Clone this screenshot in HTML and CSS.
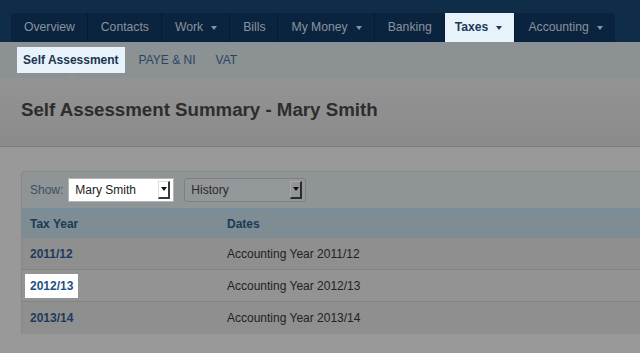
FILE: index.html
```html
<!DOCTYPE html>
<html lang="en">
<head>
  <meta charset="UTF-8" />
  <title>Self Assessment Summary - Mary Smith</title>
  <link rel="stylesheet" href="styles.css">
</head>
<body>

  <!-- Main navigation -->
  <header class="topbar">
    <ul class="tabs">
      <li>Overview</li>
      <li>Contacts</li>
      <li>Work <span class="caret"></span></li>
      <li>Bills</li>
      <li>My Money <span class="caret"></span></li>
      <li>Banking</li>
      <li class="active">Taxes <span class="caret"></span></li>
      <li class="last">Accounting <span class="caret"></span></li>
    </ul>
  </header>

  <!-- Sub navigation -->
  <nav class="subnav">
    <a href="#" class="current">Self Assessment</a>
    <a href="#">PAYE &amp; NI</a>
    <a href="#">VAT</a>
  </nav>

  <section class="page-head">
    <h1>Self Assessment Summary - Mary Smith</h1>
  </section>

  <main class="content">
    <div class="panel">
      <div class="toolbar">
        <label>Show:</label>
        <div class="select select-light">
          <span>Mary Smith</span>
          <span class="select-btn"></span>
        </div>
        <div class="select select-dark">
          <span>History</span>
          <span class="select-btn"></span>
        </div>
      </div>

      <div class="row row-head">
        <div>Tax Year</div>
        <div>Dates</div>
      </div>
      <div class="row odd">
        <div><a href="#" class="year">2011/12</a></div>
        <div>Accounting Year 2011/12</div>
      </div>
      <div class="row even">
        <div><a href="#" class="year spot">2012/13</a></div>
        <div>Accounting Year 2012/13</div>
      </div>
      <div class="row odd">
        <div><a href="#" class="year">2013/14</a></div>
        <div>Accounting Year 2013/14</div>
      </div>
    </div>
  </main>

</body>
</html>
```

FILE: styles.css
```css
* { margin: 0; padding: 0; box-sizing: border-box; }
body {
  font-family: 'Liberation Sans', Arial, sans-serif;
  font-size: 12px;
  background-color: #999;
  color: #222;
  overflow: hidden;
}
a { text-decoration: none; color: inherit; }

/* --- top nav --- */
.topbar {
  background-color: #0f2c48;
  padding: 13px 0 0 11px;
  height: 42px;
}
.tabs {
  list-style: none;
  display: inline-flex;
  background-color: #0a2440;
  border-radius: 4px 4px 0 0;
  height: 29px;
}
.tabs li {
  display: flex;
  align-items: center;
  gap: 8px;
  padding: 0 12px 0 13px;
  color: #8a929b;
  font-size: 12.2px;
  border-right: 1px solid #071b30;
  line-height: 29px;
}
.tabs li.last { border-right: none; padding-right: 12px; }
.tabs li.active {
  background-color: #e8f2fb;
  color: #1b3a58;
  font-weight: bold;
  padding-left: 10px;
}
.caret {
  width: 0;
  height: 0;
  border-left: 3.5px solid transparent;
  border-right: 3.5px solid transparent;
  border-top: 4px solid #8a929b;
  margin-top: 1px;
}
.active .caret { border-top-color: #1b3a58; }

/* --- sub nav --- */
.subnav {
  background-color: #8c9194;
  height: 36px;
  padding-left: 17px;
  display: flex;
  align-items: center;
  gap: 8px;
  position: relative;
}
.subnav a {
  color: #2a4560;
  padding: 0 6px;
  line-height: 26px;
}
.subnav a.current {
  background-color: #e8f2fa;
  color: #1c3450;
  font-weight: bold;
}
.subnav::after {
  content: "";
  position: absolute;
  left: 66px;
  bottom: 0;
  border-left: 6px solid transparent;
  border-right: 6px solid transparent;
  border-bottom: 4px solid #939393;
}

/* --- page heading --- */
.page-head {
  background: linear-gradient(#939393, #8b8b8b);
  padding: 20px 21px 24px;
  border-bottom: 1px solid #7d7d7d;
}
.page-head h1 {
  font-size: 18.7px;
  line-height: 24px;
  color: #2d2d2d;
}

/* --- content --- */
.content {
  padding: 24px 0 0 21px;
}
.panel {
  border: 1px solid #85898b;
  border-right: none;
  border-bottom: none;
  border-radius: 4px 0 0 0;
}
.toolbar {
  background-color: #8f9496;
  height: 36px;
  padding: 0 8px;
  display: flex;
  align-items: center;
  border-radius: 4px 0 0 0;
}
.toolbar label {
  color: #3c5062;
  margin-right: 5px;
}
.select {
  display: flex;
  align-items: center;
  justify-content: space-between;
  height: 24px;
  padding: 0 3px 0 6px;
}
.select-light {
  width: 106px;
  background-color: #fff;
  border: 1px solid #b5b5b5;
  color: #222;
}
.select-dark {
  width: 122px;
  margin-left: 10px;
  background-color: #939799;
  border: 1px solid #7b8083;
  border-radius: 3px;
  color: #2a2a2a;
}
.select-btn {
  width: 12px;
  height: 18px;
  border-right: 2px solid #3a3a3a;
  border-bottom: 2px solid #3a3a3a;
  border-left: 1px solid #ddd;
  border-top: 1px solid #ddd;
  position: relative;
}
.select-dark .select-btn {
  border-left-color: #a5a9ab;
  border-top-color: #a5a9ab;
  border-right-color: #2c2c2c;
  border-bottom-color: #2c2c2c;
}
.select-btn::after {
  content: "";
  position: absolute;
  left: 2px;
  top: 5px;
  border-left: 3px solid transparent;
  border-right: 3px solid transparent;
  border-top: 4px solid #111;
}

/* --- table rows --- */
.row {
  display: grid;
  grid-template-columns: 205px 1fr;
  align-items: center;
  height: 32px;
  border-bottom: 1px solid #838383;
}
.row > div:first-child { padding-left: 8px; }
.row-head {
  height: 30px;
  background-color: #7e8c94;
  border-top: 1px solid #6f8da5;
  border-bottom: none;
  font-weight: bold;
  color: #1c3a57;
}
.row.odd { background-color: #8f8f8f; }
.row.even { background-color: #939393; }
.row:last-child { border-bottom: none; }
.year {
  font-weight: bold;
  color: #1d3b5c;
}
.year.spot {
  display: inline-block;
  background-color: #fff;
  color: #1d5185;
  padding: 0 5px;
  margin-left: -5px;
  line-height: 24px;
}
```
